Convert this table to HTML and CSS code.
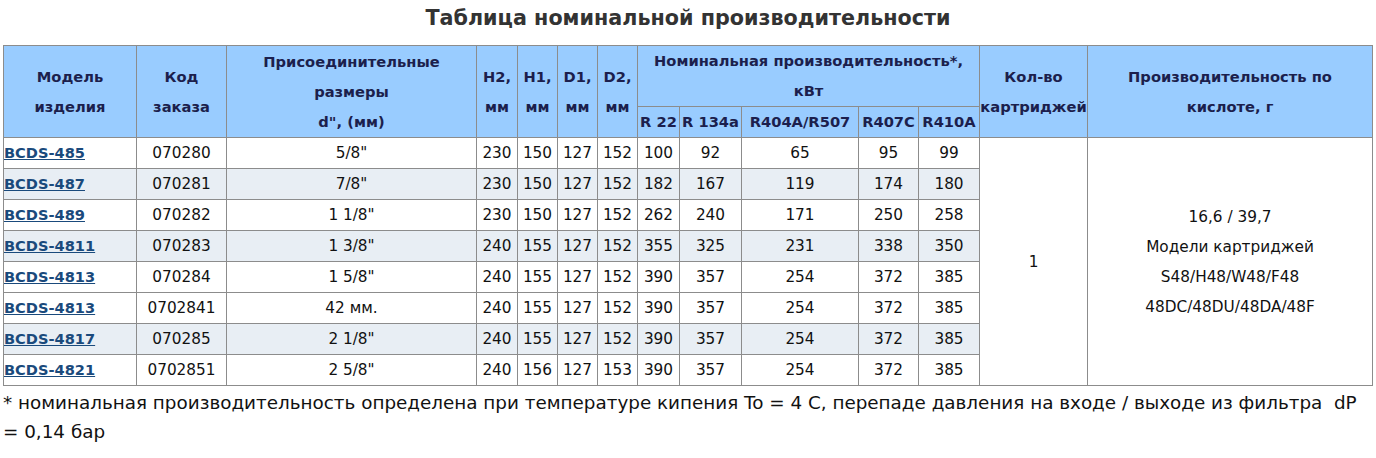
FILE: index.html
```html
<!DOCTYPE html>
<html lang="ru">
<head>
<meta charset="utf-8">
<title>Таблица номинальной производительности</title>
<link rel="stylesheet" href="styles.css">
</head>
<body>
<h2 class="title">Таблица номинальной производительности</h2>
<table class="perf">
  <colgroup>
    <col style="width:133px"><col style="width:90px"><col style="width:250px">
    <col style="width:41px"><col style="width:40px"><col style="width:40px"><col style="width:40px">
    <col style="width:42px"><col style="width:62px"><col style="width:117px"><col style="width:60px"><col style="width:61px">
    <col style="width:108px"><col style="width:285px">
  </colgroup>
  <thead>
    <tr>
      <th rowspan="2">Модель<br>изделия</th>
      <th rowspan="2">Код<br>заказа</th>
      <th rowspan="2">Присоединительные<br>размеры<br>d", (мм)</th>
      <th rowspan="2">H2,<br>мм</th>
      <th rowspan="2">H1,<br>мм</th>
      <th rowspan="2">D1,<br>мм</th>
      <th rowspan="2">D2,<br>мм</th>
      <th colspan="5">Номинальная производительность*,<br>кВт</th>
      <th rowspan="2">Кол-во<br>картриджей</th>
      <th rowspan="2">Производительность по<br>кислоте, г</th>
    </tr>
    <tr>
      <th>R 22</th><th>R 134a</th><th>R404A/R507</th><th>R407C</th><th>R410A</th>
    </tr>
  </thead>
  <tbody>
    <tr class="w">
      <td class="model"><a href="#">BCDS-485</a></td><td>070280</td><td>5/8"</td>
      <td>230</td><td>150</td><td>127</td><td>152</td><td>100</td><td>92</td><td>65</td><td>95</td><td>99</td>
      <td rowspan="8" class="span">1</td>
      <td rowspan="8" class="span">16,6 / 39,7<br>Модели картриджей<br>S48/H48/W48/F48<br>48DC/48DU/48DA/48F</td>
    </tr>
    <tr class="l">
      <td class="model"><a href="#">BCDS-487</a></td><td>070281</td><td>7/8"</td>
      <td>230</td><td>150</td><td>127</td><td>152</td><td>182</td><td>167</td><td>119</td><td>174</td><td>180</td>
    </tr>
    <tr class="w">
      <td class="model"><a href="#">BCDS-489</a></td><td>070282</td><td>1 1/8"</td>
      <td>230</td><td>150</td><td>127</td><td>152</td><td>262</td><td>240</td><td>171</td><td>250</td><td>258</td>
    </tr>
    <tr class="l">
      <td class="model"><a href="#">BCDS-4811</a></td><td>070283</td><td>1 3/8"</td>
      <td>240</td><td>155</td><td>127</td><td>152</td><td>355</td><td>325</td><td>231</td><td>338</td><td>350</td>
    </tr>
    <tr class="w">
      <td class="model"><a href="#">BCDS-4813</a></td><td>070284</td><td>1 5/8"</td>
      <td>240</td><td>155</td><td>127</td><td>152</td><td>390</td><td>357</td><td>254</td><td>372</td><td>385</td>
    </tr>
    <tr class="w">
      <td class="model"><a href="#">BCDS-4813</a></td><td>0702841</td><td>42 мм.</td>
      <td>240</td><td>155</td><td>127</td><td>152</td><td>390</td><td>357</td><td>254</td><td>372</td><td>385</td>
    </tr>
    <tr class="l">
      <td class="model"><a href="#">BCDS-4817</a></td><td>070285</td><td>2 1/8"</td>
      <td>240</td><td>155</td><td>127</td><td>152</td><td>390</td><td>357</td><td>254</td><td>372</td><td>385</td>
    </tr>
    <tr class="w">
      <td class="model"><a href="#">BCDS-4821</a></td><td>0702851</td><td>2 5/8"</td>
      <td>240</td><td>156</td><td>127</td><td>153</td><td>390</td><td>357</td><td>254</td><td>372</td><td>385</td>
    </tr>
  </tbody>
</table>
<p class="note">* номинальная производительность определена при температуре кипения To = 4 C, перепаде давления на входе / выходе из фильтра&nbsp; dP = 0,14 бар</p>
</body>
</html>
```

FILE: styles.css
```css
html, body {
  margin: 0;
  padding: 0;
  background: #ffffff;
}
body {
  padding: 0 3px;
  font-family: "DejaVu Sans", Verdana, sans-serif;
  color: #111111;
}
.title {
  margin: 0;
  height: 37px;
  line-height: 37px;
  text-align: center;
  font-size: 20.7px;
  font-weight: bold;
  color: #333333;
}
.perf {
  margin-top: 8px;
  width: 1370px;
  table-layout: fixed;
  border-collapse: collapse;
  font-size: 15.3px;
  line-height: 30px;
}
.perf th, .perf td {
  border: 1px solid #8c8c8c;
  padding: 0;
  text-align: center;
  vertical-align: middle;
  white-space: nowrap;
  overflow: visible;
}
.perf th {
  background: #99ccff;
  color: #1c1f4d;
  font-weight: bold;
  font-size: 14.7px;
}
.perf td {
  color: #111111;
}
.perf tr.w td { background: #ffffff; }
.perf tr.l td { background: #e8eef4; }
.perf td.span { background: #e8eef4; }
.perf td.model {
  text-align: left;
  font-weight: bold;
  font-size: 14.6px;
}
.perf td.model a {
  color: #1a4a7c;
  text-decoration: underline;
}
.note {
  margin: 0;
  padding-top: 2px;
  font-size: 18.35px;
  line-height: 29px;
  color: #111111;
}
```
